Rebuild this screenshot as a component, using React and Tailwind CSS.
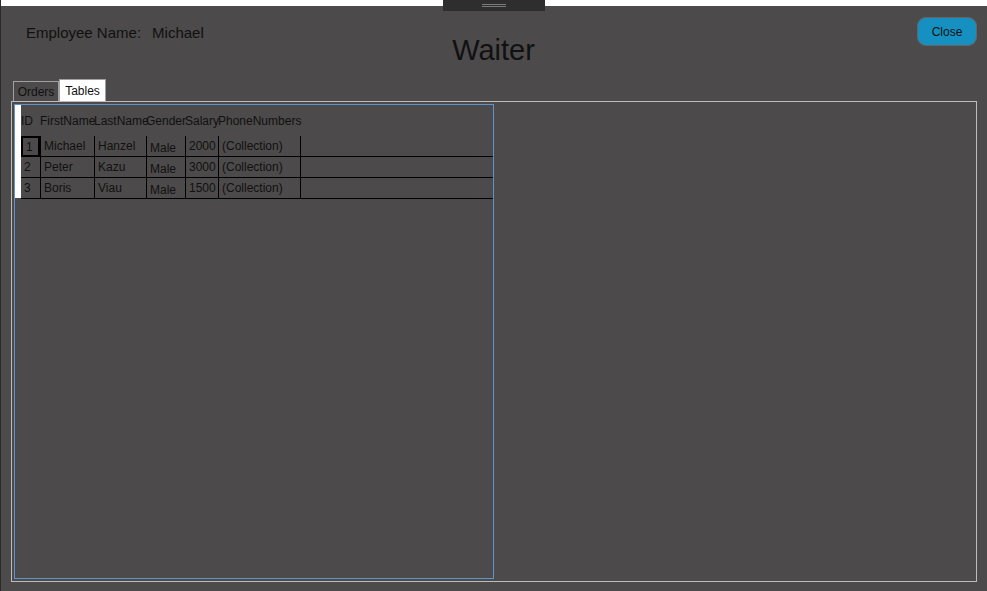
const columns = [
  { key: 'id', label: 'ID', w: 'w-[19px]' },
  { key: 'first', label: 'FirstName', w: 'w-[54px]' },
  { key: 'last', label: 'LastName', w: 'w-[52px]' },
  { key: 'gender', label: 'Gender', w: 'w-[39px]' },
  { key: 'salary', label: 'Salary', w: 'w-[33px]' },
  { key: 'phones', label: 'PhoneNumbers', w: 'w-[82px]' },
]

const rows = [
  { id: 1, first: 'Michael', last: 'Hanzel', gender: 'Male', salary: 2000, phones: '(Collection)' },
  { id: 2, first: 'Peter', last: 'Kazu', gender: 'Male', salary: 3000, phones: '(Collection)' },
  { id: 3, first: 'Boris', last: 'Viau', gender: 'Male', salary: 1500, phones: '(Collection)' },
]

function EmployeeGrid() {
  return (
    <div className="ml-px mt-px w-[480px] h-[475px] border border-[#5f93cc] flex">
      {/* row header gutter */}
      <div className="w-[6px] h-[93px] bg-white" />
      <div className="flex-1 flex flex-col">
        {/* column headers */}
        <div className="flex h-[31px] items-center pt-px">
          {columns.map(c => (
            <div key={c.key} className={`${c.w} shrink-0 whitespace-nowrap overflow-visible`}>{c.label}</div>
          ))}
        </div>
        {rows.map((r, i) => (
          <div key={r.id} className="flex h-[21px] border-b border-black">
            {columns.map((c, j) => (
              <div
                key={c.key}
                className={`${c.w} shrink-0 flex items-center pl-[3px] whitespace-nowrap ${j > 0 ? 'border-l border-black' : ''} ${i === 0 && j === 0 ? 'border-2 border-black -mb-px' : ''} ${c.key === 'gender' ? 'pt-[3px]' : ''}`}
              >
                {r[c.key]}
              </div>
            ))}
            <div className="w-px h-full bg-black" />
          </div>
        ))}
      </div>
    </div>
  )
}

export default function App() {
  return (
    <div className="relative w-[987px] h-[591px] overflow-hidden bg-[#4c4a4a] text-[#111] font-['Liberation_Sans',sans-serif] text-[12px]">
      {/* left window edge */}
      <div className="absolute left-0 top-0 w-px h-full bg-[#2a2a2a]" />
      {/* title bar grip */}
      <div className="h-[6px] bg-white" />
      <div className="absolute left-[443px] top-0 w-[102px] h-[11px] bg-[#2e2e2e] flex flex-col items-center pt-[4px] gap-[1px]">
        <div className="w-[24px] h-px bg-[#7a7a7a]" />
        <div className="w-[24px] h-px bg-[#7a7a7a]" />
      </div>

      {/* header */}
      <div className="relative h-[73px] flex items-start">
        <div className="flex gap-[11px] pl-[26px] pt-[16px] text-[15px]">
          <span>Employee Name:</span>
          <span>Michael</span>
        </div>
        <div className="absolute left-0 right-0 top-[26px] text-center text-[29px] leading-[36px]">Waiter</div>
        <button className="absolute right-[10px] top-[11px] w-[60px] h-[29px] rounded-[9px] bg-[#1690c0] border border-[#656565] text-[12px] text-[#111]">
          Close
        </button>
      </div>

      {/* tabs */}
      <div className="ml-[11px]">
        <div className="flex items-end h-[22px] ml-[2px]">
          <div className="h-[20px] w-[46px] border border-b-0 border-[#a0a0a0] flex items-center justify-center">Orders</div>
          <div className="h-[22px] w-[47px] bg-white border border-b-0 border-[#a0a0a0] flex items-center justify-center">Tables</div>
        </div>
        <div className="w-[966px] h-[481px] border border-[#bcbcbc] p-px">
          <EmployeeGrid />
        </div>
      </div>
    </div>
  )
}
